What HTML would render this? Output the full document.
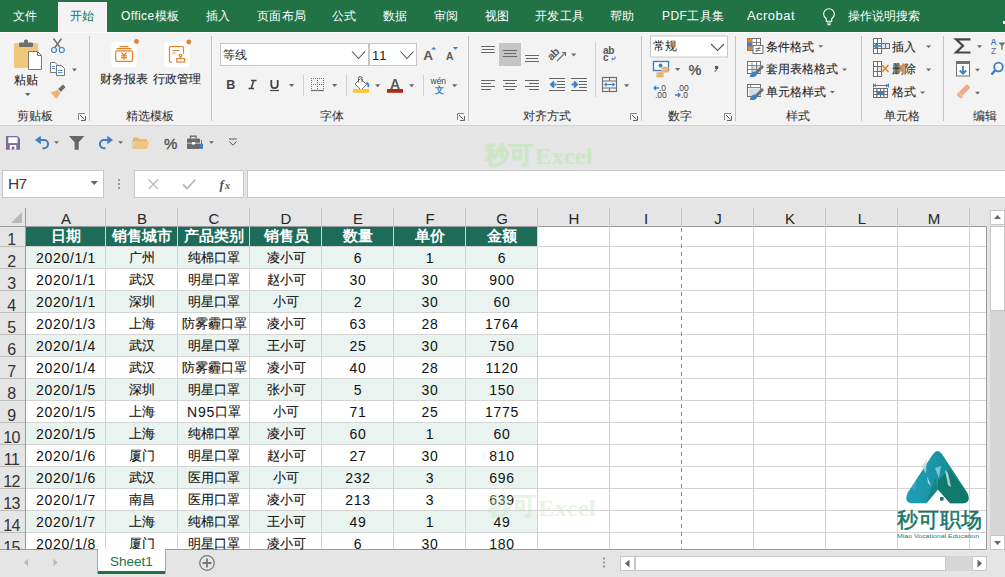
<!DOCTYPE html><html><head><meta charset="utf-8"><style>
html,body{margin:0;padding:0;width:1005px;height:577px;overflow:hidden;position:relative;font-family:"Liberation Sans",sans-serif;background:#fff}
</style></head><body>
<div style="position:absolute;left:0px;top:0px;width:1005px;height:32px;background:#217346"></div>
<div style="position:absolute;left:58px;top:2px;width:49px;height:31px;background:#f3f3f3;border:1px solid #fcfcfc;border-bottom:0;box-sizing:border-box"></div>
<div style="position:absolute;left:13px;top:7px;white-space:nowrap;color:#fff;font-size:12px;line-height:19px;letter-spacing:0.4px">文件</div>
<div style="position:absolute;left:121px;top:7px;white-space:nowrap;color:#fff;font-size:12px;line-height:19px;letter-spacing:0.4px">Office模板</div>
<div style="position:absolute;left:206px;top:7px;white-space:nowrap;color:#fff;font-size:12px;line-height:19px;letter-spacing:0.4px">插入</div>
<div style="position:absolute;left:257px;top:7px;white-space:nowrap;color:#fff;font-size:12px;line-height:19px;letter-spacing:0.4px">页面布局</div>
<div style="position:absolute;left:332px;top:7px;white-space:nowrap;color:#fff;font-size:12px;line-height:19px;letter-spacing:0.4px">公式</div>
<div style="position:absolute;left:383px;top:7px;white-space:nowrap;color:#fff;font-size:12px;line-height:19px;letter-spacing:0.4px">数据</div>
<div style="position:absolute;left:434px;top:7px;white-space:nowrap;color:#fff;font-size:12px;line-height:19px;letter-spacing:0.4px">审阅</div>
<div style="position:absolute;left:485px;top:7px;white-space:nowrap;color:#fff;font-size:12px;line-height:19px;letter-spacing:0.4px">视图</div>
<div style="position:absolute;left:535px;top:7px;white-space:nowrap;color:#fff;font-size:12px;line-height:19px;letter-spacing:0.4px">开发工具</div>
<div style="position:absolute;left:610px;top:7px;white-space:nowrap;color:#fff;font-size:12px;line-height:19px;letter-spacing:0.4px">帮助</div>
<div style="position:absolute;left:662px;top:7px;white-space:nowrap;color:#fff;font-size:12px;line-height:19px;letter-spacing:0.4px">PDF工具集</div>
<div style="position:absolute;left:747px;top:7px;white-space:nowrap;color:#fff;font-size:13px;line-height:18px;letter-spacing:0.45px">Acrobat</div>
<div style="position:absolute;left:1003px;top:21px;width:2px;height:3px;background:#fff"></div>
<div style="position:absolute;left:848px;top:7px;white-space:nowrap;color:#fff;font-size:12px;line-height:18px">操作说明搜索</div>
<svg style="position:absolute;left:820px;top:8px" width="18" height="18" viewBox="0 0 18 18"><path d="M6.3 13.3v-2.6c-1.6-1-2.7-2.7-2.7-4.6a5.4 5.4 0 0 1 10.8 0c0 1.9-1.1 3.6-2.7 4.6v2.6z" fill="none" stroke="#fff" stroke-width="1.1"/><path d="M6.8 15h4.4M7.6 16.6h2.8" stroke="#fff" stroke-width="1.1"/></svg>
<div style="position:absolute;left:70px;top:7px;white-space:nowrap;color:#217346;font-size:12px;line-height:19px;letter-spacing:0.4px">开始</div>
<div style="position:absolute;left:0px;top:32px;width:1005px;height:93px;background:#f3f3f3"></div>
<div style="position:absolute;left:0px;top:32px;width:1005px;height:1px;background:#fafafa"></div>
<div style="position:absolute;left:0px;top:125px;width:1005px;height:1px;background:#d2d2d2"></div>
<svg style="position:absolute;left:0;top:0" width="1005" height="125" viewBox="0 0 1005 125"><rect x="14" y="43" width="24" height="25" rx="1.5" fill="#efc87c"/><rect x="19" y="42.5" width="14" height="4.5" rx="1" fill="#6f6f6f"/><rect x="24" y="39.5" width="4" height="4" rx="1.5" fill="#6f6f6f"/><path d="M28.5 51.5h9l4 4v14h-13z" fill="#fff" stroke="#777" stroke-width="1"/><path d="M37.5 51.5v4h4" fill="none" stroke="#777" stroke-width="1"/><path d="M25 93h5.5l-2.75 3z" fill="#666"/><path d="M53.5 38.5l6.5 9M61.5 38.5l-6.5 9" stroke="#6f6f6f" stroke-width="1.5" fill="none"/><circle cx="54" cy="50" r="2.5" fill="none" stroke="#3c7fc4" stroke-width="1.1"/><circle cx="61.8" cy="50" r="2.5" fill="none" stroke="#3c7fc4" stroke-width="1.1"/><path d="M50.5 62.5h4.5l2 2v8h-6.5z" fill="#fff" stroke="#777" stroke-width="1"/><path d="M56.5 65.5h5l3 3v7h-8z" fill="#fff" stroke="#777" stroke-width="1"/><path d="M52 66.5h3M52 68.5h3M58 70.5h4.5M58 72.5h4.5" stroke="#3c7fc4" stroke-width="0.9"/><path d="M72 68.5h5l-2.5 3z" fill="#6a6a6a"/><path d="M58 89l5-4.5 2.5 2.5-4.5 5z" fill="#6f6f6f"/><path d="M50.5 92.5l7-2.5 3 3-4 6z" fill="#e8b472"/><rect x="111" y="41.5" width="26" height="26" rx="2.5" fill="#fff" stroke="#fdf3e3" stroke-width="0.8"/><rect x="164" y="41.5" width="26" height="26" rx="2.5" fill="#fff" stroke="#fdf3e3" stroke-width="0.8"/><circle cx="136.5" cy="41.5" r="2.4" fill="#e3812f"/><circle cx="188.8" cy="42" r="2.4" fill="#e3812f"/><g stroke="#e3812f" fill="none" stroke-width="1.2"><path d="M119.5 46.6h9M116.5 48.6h15"/><rect x="115.8" y="50.8" width="16.6" height="10.6" rx="1"/><path d="M121.5 52.5l2.5 2.8 2.5-2.8M124 55.3v4.5M121 55.8h6M121 57.8h6"/></g><g stroke="#e3812f" fill="none" stroke-width="1.2"><path d="M172 62.2h-1.5a1 1 0 0 1-1-1v-13.7a1 1 0 0 1 1-1h12a1 1 0 0 1 1 1v6"/><path d="M172.5 50.5h7M172.5 53h3"/><circle cx="180.5" cy="55.6" r="1.3"/><path d="M180.5 57v1.5"/><rect x="176.8" y="58.6" width="7.8" height="3.4"/></g><rect x="220.5" y="43.5" width="148" height="22" fill="#fff" stroke="#c6c6c6"/><rect x="369.5" y="43.5" width="47" height="22" fill="#fff" stroke="#c6c6c6"/><path d="M352 51.5l6.5 7 6.5-7M400.5 51.5l6.5 7 6.5-7" fill="none" stroke="#555" stroke-width="1.1"/><text x="423.3" y="59.8" font-family="Liberation Sans" font-weight="bold" font-size="13.5" fill="#5a5a5a">A</text><path d="M431 49.6l2.7-2.6 2.7 2.6z" fill="#3c7fc4"/><text x="446" y="59.8" font-family="Liberation Sans" font-weight="bold" font-size="10.3" fill="#5a5a5a">A</text><path d="M452.8 47h5.2l-2.6 2.8z" fill="#3c7fc4"/><text x="226.3" y="89" font-family="Liberation Sans" font-weight="bold" font-size="12.5" fill="#444">B</text><path d="M251 80.5h5.5M248.5 88.5h5.5M253.8 80.5l-2.6 8" stroke="#444" stroke-width="1.6" fill="none"/><path d="M271.3 80v5a3.2 3.2 0 0 0 6.4 0v-5" stroke="#444" stroke-width="1.8" fill="none"/><path d="M270 90.5h9" stroke="#444" stroke-width="1.2"/><path d="M289 84h5.3l-2.65 3z" fill="#6a6a6a"/><g fill="#6f6f6f"><rect x="311" y="78" width="1" height="1"/><rect x="311" y="84" width="1" height="1"/><rect x="313" y="78" width="1" height="1"/><rect x="313" y="84" width="1" height="1"/><rect x="315" y="78" width="1" height="1"/><rect x="315" y="84" width="1" height="1"/><rect x="317" y="78" width="1" height="1"/><rect x="317" y="84" width="1" height="1"/><rect x="319" y="78" width="1" height="1"/><rect x="319" y="84" width="1" height="1"/><rect x="321" y="78" width="1" height="1"/><rect x="321" y="84" width="1" height="1"/><rect x="323" y="78" width="1" height="1"/><rect x="323" y="84" width="1" height="1"/><rect x="311" y="78" width="1" height="1"/><rect x="317" y="78" width="1" height="1"/><rect x="323" y="78" width="1" height="1"/><rect x="311" y="80" width="1" height="1"/><rect x="317" y="80" width="1" height="1"/><rect x="323" y="80" width="1" height="1"/><rect x="311" y="82" width="1" height="1"/><rect x="317" y="82" width="1" height="1"/><rect x="323" y="82" width="1" height="1"/><rect x="311" y="84" width="1" height="1"/><rect x="317" y="84" width="1" height="1"/><rect x="323" y="84" width="1" height="1"/><rect x="311" y="86" width="1" height="1"/><rect x="317" y="86" width="1" height="1"/><rect x="323" y="86" width="1" height="1"/><rect x="311" y="88" width="1" height="1"/><rect x="317" y="88" width="1" height="1"/><rect x="323" y="88" width="1" height="1"/></g><path d="M311 90.5h13" stroke="#6f6f6f" stroke-width="1.2"/><path d="M332 84h5.3l-2.65 3z" fill="#6a6a6a"/><path d="M355 84l5.5-5.5 6 6-5.5 5.5z" fill="#fff" stroke="#6f6f6f" stroke-width="1"/><path d="M358.5 82.5v-4.2a1.8 1.8 0 0 1 3.6 0v3.8" fill="none" stroke="#555" stroke-width="1"/><path d="M366.5 82.5c1.5 1 2.5 2.5 1.6 4.5" stroke="#3c7fc4" stroke-width="1.8" fill="none"/><rect x="353" y="89" width="16" height="3.8" fill="#fcc630"/><path d="M375 84.2h5.3l-2.65 3z" fill="#6a6a6a"/><text x="390" y="89.3" font-family="Liberation Sans" font-weight="bold" font-size="14" fill="#5a5a5a">A</text><rect x="387" y="89" width="16" height="3.8" fill="#b2290c"/><path d="M409 84.2h5.3l-2.65 3z" fill="#6a6a6a"/><text x="430.5" y="83.7" font-family="Liberation Sans" font-size="8.5" fill="#444">wén</text><text x="434.5" y="92.8" font-family="Liberation Sans" font-size="9" font-weight="bold" fill="#3c7fc4">文</text><path d="M452 84.2h5.3l-2.65 3z" fill="#6a6a6a"/><path d="M78.5 120v-6.5h6.5" fill="none" stroke="#888" stroke-width="1"/><path d="M80 115l4.5 4.5M85.5 116v4.5h-4.5" fill="none" stroke="#666" stroke-width="1"/><path d="M457.5 120v-6.5h6.5" fill="none" stroke="#888" stroke-width="1"/><path d="M459 115l4.5 4.5M464.5 116v4.5h-4.5" fill="none" stroke="#666" stroke-width="1"/><path d="M630.5 120v-6.5h6.5" fill="none" stroke="#888" stroke-width="1"/><path d="M632 115l4.5 4.5M637.5 116v4.5h-4.5" fill="none" stroke="#666" stroke-width="1"/><path d="M724.5 120v-6.5h6.5" fill="none" stroke="#888" stroke-width="1"/><path d="M726 115l4.5 4.5M731.5 116v4.5h-4.5" fill="none" stroke="#666" stroke-width="1"/><rect x="499" y="43" width="22" height="23" fill="#c5c5c5"/><path d="M481 46.5h14" stroke="#666" stroke-width="1"/><path d="M482 49.5h12" stroke="#666" stroke-width="1"/><path d="M481 52.5h14" stroke="#666" stroke-width="1"/><path d="M503 50.5h14" stroke="#666" stroke-width="1"/><path d="M504 53.5h12" stroke="#666" stroke-width="1"/><path d="M503 56.5h14" stroke="#666" stroke-width="1"/><path d="M525 55.5h14" stroke="#666" stroke-width="1"/><path d="M526 58.5h12" stroke="#666" stroke-width="1"/><path d="M525 61.5h14" stroke="#666" stroke-width="1"/><text x="0" y="0" transform="translate(551.5 61) rotate(-45)" font-family="Liberation Sans" font-size="11" fill="#5a5a5a" font-weight="bold" letter-spacing="-0.5">ab</text><path d="M557 61l8-8M562 52.5h3.5v3.5" stroke="#6f6f6f" stroke-width="1.1" fill="none"/><path d="M571 53.5h5.3l-2.65 3z" fill="#6a6a6a"/><path d="M481 80.5h14" stroke="#666" stroke-width="1"/><path d="M481 83.5h10" stroke="#666" stroke-width="1"/><path d="M481 86.5h14" stroke="#666" stroke-width="1"/><path d="M481 89.5h10" stroke="#666" stroke-width="1"/><path d="M503 80.5h14" stroke="#666" stroke-width="1"/><path d="M505 83.5h10" stroke="#666" stroke-width="1"/><path d="M503 86.5h14" stroke="#666" stroke-width="1"/><path d="M505 89.5h10" stroke="#666" stroke-width="1"/><path d="M525 80.5h14" stroke="#666" stroke-width="1"/><path d="M529 83.5h10" stroke="#666" stroke-width="1"/><path d="M525 86.5h14" stroke="#666" stroke-width="1"/><path d="M529 89.5h10" stroke="#666" stroke-width="1"/><path d="M549 78.5h16" stroke="#666" stroke-width="1"/><path d="M557 81.5h8" stroke="#666" stroke-width="1"/><path d="M557 84.5h8" stroke="#666" stroke-width="1"/><path d="M557 87.5h8" stroke="#666" stroke-width="1"/><path d="M549 90.5h16" stroke="#666" stroke-width="1"/><path d="M556.5 84.5h-5.5M554 81.5l-3 3 3 3" stroke="#3c7fc4" stroke-width="2" fill="none"/><path d="M571 78.5h16" stroke="#666" stroke-width="1"/><path d="M579 81.5h8" stroke="#666" stroke-width="1"/><path d="M579 84.5h8" stroke="#666" stroke-width="1"/><path d="M579 87.5h8" stroke="#666" stroke-width="1"/><path d="M571 90.5h16" stroke="#666" stroke-width="1"/><path d="M571.5 84.5h5.5M574 81.5l3 3-3 3" stroke="#3c7fc4" stroke-width="2" fill="none"/><text x="603" y="53.8" font-family="Liberation Sans" font-size="10" fill="#555" font-weight="bold" letter-spacing="-0.3">ab</text><text x="603" y="61" font-family="Liberation Sans" font-size="10" fill="#555" font-weight="bold">c</text><path d="M615 56.5v2.5h-3M613 57.8l-1.3 1.2 1.3 1.2" stroke="#3c7fc4" stroke-width="1" fill="none"/><rect x="602.5" y="77.5" width="14" height="14" fill="none" stroke="#6f6f6f" stroke-width="1.2"/><path d="M602.5 81h14M602.5 88h14M609.5 77.5v3.5M609.5 88v3.5" stroke="#6f6f6f" stroke-width="1.1"/><path d="M604.5 84.5h10M606.5 82.8l-1.8 1.7 1.8 1.7M612.5 82.8l1.8 1.7-1.8 1.7" stroke="#3c7fc4" stroke-width="1.1" fill="none"/><path d="M624 84.3h5.3l-2.65 3z" fill="#6a6a6a"/><rect x="650.5" y="36" width="77" height="21" fill="#fff" stroke="#c6c6c6"/><path d="M711 44l6.5 6.5 6.5-6.5" fill="none" stroke="#555" stroke-width="1.1"/><rect x="653.5" y="61.5" width="15" height="9" fill="#fff" stroke="#3c7fc4" stroke-width="1.4"/><circle cx="660.5" cy="65.5" r="2" fill="#3c7fc4"/><g fill="#e8b472"><ellipse cx="665" cy="68" rx="4" ry="1.5"/><ellipse cx="665" cy="71" rx="4" ry="1.5"/><ellipse cx="660" cy="73.5" rx="4" ry="1.5"/><ellipse cx="660" cy="76" rx="4" ry="1.5"/></g><path d="M675 68h5.3l-2.65 3z" fill="#6a6a6a"/><text x="688.5" y="74.6" font-family="Liberation Sans" font-size="14.5" font-weight="bold" fill="#5a5a5a">%</text><path d="M716.8 65.8a1.7 1.7 0 1 1 0 3.4c0 0 .8 1.5-2.2 2.6l-.3-.7c1.6-.7 1.8-1.5 1.8-1.9a1.7 1.7 0 0 1 .7-3.4z" fill="#555"/><text x="659" y="90.8" font-family="Liberation Sans" font-size="8.5" fill="#444">.0</text><text x="655" y="97.8" font-family="Liberation Sans" font-size="8.5" fill="#444">.00</text><path d="M659 88h-5M656 86l-2 2 2 2" stroke="#3c7fc4" stroke-width="1.3" fill="none"/><text x="677" y="90.8" font-family="Liberation Sans" font-size="8.5" fill="#444">.00</text><text x="681" y="97.8" font-family="Liberation Sans" font-size="8.5" fill="#444">.0</text><path d="M675 95h5M678 93l2 2-2 2" stroke="#3c7fc4" stroke-width="1.3" fill="none"/><rect x="747.5" y="38.5" width="13" height="12" fill="#fff" stroke="#6f6f6f"/><path d="M747.5 42.5h13M747.5 46.5h13M752 38.5v12M756.5 38.5v12" stroke="#6f6f6f" stroke-width="0.8"/><rect x="747.5" y="38.5" width="4.5" height="4" fill="#e3812f"/><rect x="747.5" y="42.5" width="4.5" height="4" fill="#3c7fc4"/><rect x="747.5" y="46.5" width="4.5" height="4" fill="#e3812f"/><rect x="753" y="45.5" width="10" height="8" fill="#fff" stroke="#6f6f6f"/><path d="M755.5 48.5h5M755.5 50.5h5M759.5 47l-3 5" stroke="#555" stroke-width="0.8"/><rect x="747.5" y="61.5" width="13" height="12" fill="#fff" stroke="#6f6f6f"/><rect x="752" y="65.5" width="8.5" height="7.5" fill="#cfe0ea"/><path d="M747.5 65.5h13M747.5 69.5h13M752 61.5v12M756.5 61.5v12" stroke="#6f6f6f" stroke-width="0.8"/><path d="M755 72l7-7 2 2-7 7z" fill="#6f6f6f"/><path d="M750 77c0-3 2-5.5 5-5.5l2 2c0 3-3 4-7 3.5z" fill="#3c7fc4"/><rect x="747.5" y="84.5" width="13" height="12" fill="#fff" stroke="#6f6f6f"/><rect x="749" y="88.5" width="11.5" height="7.5" fill="#cfe0ea"/><path d="M747.5 87.5h13M750.5 84.5v3" stroke="#6f6f6f" stroke-width="0.8"/><path d="M755 95l7-7 2 2-7 7z" fill="#6f6f6f"/><path d="M750 100c0-3 2-5.5 5-5.5l2 2c0 3-3 4-7 3.5z" fill="#3c7fc4"/><path d="M818.3 45.2h4.8l-2.4 2.5z" fill="#6a6a6a"/><path d="M842.2 68.5h4.8l-2.4 2.5z" fill="#6a6a6a"/><path d="M830 91h4.8l-2.4 2.5z" fill="#6a6a6a"/><g stroke="#6f6f6f" stroke-width="1" fill="#fff"><rect x="873.5" y="38.5" width="4" height="5"/><rect x="877.5" y="38.5" width="4" height="5"/><rect x="873.5" y="43.5" width="4" height="5"/><rect x="877.5" y="43.5" width="4" height="5"/><rect x="873.5" y="48.5" width="4" height="5"/><rect x="877.5" y="48.5" width="4" height="5"/></g><g stroke="#6f6f6f" stroke-width="1" fill="#dbe8f0"><rect x="881.5" y="43.5" width="4" height="5"/><rect x="885.5" y="43.5" width="4" height="5"/></g><path d="M882 46h-7M877.5 43.2l-2.8 2.8 2.8 2.8" stroke="#3c7fc4" stroke-width="1.7" fill="none"/><g stroke="#6f6f6f" stroke-width="1" fill="#fff"><rect x="873.5" y="61.5" width="4" height="5"/><rect x="877.5" y="61.5" width="4" height="5"/><rect x="873.5" y="66.5" width="4" height="5"/><rect x="877.5" y="66.5" width="4" height="5"/><rect x="873.5" y="71.5" width="4" height="5"/><rect x="877.5" y="71.5" width="4" height="5"/></g><rect x="878" y="67" width="3" height="4" fill="#dbe8f0"/><path d="M882 65l6.5 7M888.5 65l-6.5 7" stroke="#e3812f" stroke-width="1.6"/><g stroke="#6f6f6f" stroke-width="1" fill="#fff"><rect x="873.5" y="88.5" width="3.5" height="3"/><rect x="873.5" y="91.5" width="3.5" height="3"/><rect x="873.5" y="94.5" width="3.5" height="3"/><rect x="877.0" y="88.5" width="3.5" height="3"/><rect x="877.0" y="91.5" width="3.5" height="3"/><rect x="877.0" y="94.5" width="3.5" height="3"/><rect x="880.5" y="88.5" width="3.5" height="3"/><rect x="880.5" y="91.5" width="3.5" height="3"/><rect x="880.5" y="94.5" width="3.5" height="3"/><rect x="884.0" y="88.5" width="3.5" height="3"/><rect x="884.0" y="91.5" width="3.5" height="3"/><rect x="884.0" y="94.5" width="3.5" height="3"/></g><rect x="877" y="91.5" width="7" height="3" fill="#3c7fc4"/><path d="M874 85.5h14M876 84l-2 1.5 2 1.5M886 84l2 1.5-2 1.5M873.5 83.5v4M888.5 83.5v4" stroke="#3c7fc4" stroke-width="1" fill="none"/><path d="M926 45.4h5.2l-2.6 2.6z" fill="#6a6a6a"/><path d="M926 68.6h5.2l-2.6 2.6z" fill="#6a6a6a"/><path d="M920 91.5h5.2l-2.6 2.6z" fill="#6a6a6a"/><path d="M970.5 39.3h-14.5l7 6.5-7 6.7h14.5" stroke="#454545" stroke-width="2.2" fill="none" stroke-linejoin="miter"/><path d="M977 45.2h5l-2.5 2.8z" fill="#6a6a6a"/><text x="990.5" y="44.6" font-family="Liberation Sans" font-size="8.5" font-weight="bold" fill="#3c7fc4">A</text><text x="991" y="53.7" font-family="Liberation Sans" font-size="8.5" fill="#7a5f96">Z</text><path d="M998.5 42.5h7l-2.8 3.3v4h-1.4v-4z" fill="#6f6f6f"/><rect x="956.5" y="61.5" width="13" height="14.5" fill="#fff" stroke="#6f6f6f"/><rect x="956" y="61" width="14" height="3" fill="#6f6f6f"/><path d="M963 66v7.5M959.8 70.5l3.2 3.2 3.2-3.2" stroke="#3c7fc4" stroke-width="1.8" fill="none"/><path d="M975 68.8h5l-2.5 2.8z" fill="#6a6a6a"/><circle cx="998.5" cy="67" r="4.3" fill="none" stroke="#3c7fc4" stroke-width="1.8"/><path d="M995.3 70.3l-3.8 4.2" stroke="#3c7fc4" stroke-width="2.4"/><path d="M957.5 93.5l8.5-8.5a1.5 1.5 0 0 1 2 0l1.5 1.5a1.5 1.5 0 0 1 0 2l-8.5 8.5z" fill="#eea88c"/><path d="M957.5 93.5l1.2-1.2 4.5 4.5-1.2 1.2a1.5 1.5 0 0 1-2 0l-2.5-2.5a1.5 1.5 0 0 1 0-2z" fill="#eea88c"/><path d="M958.7 92.3l4.5 4.5" stroke="#fbe3d8" stroke-width="1"/><path d="M975 91.8h5l-2.5 2.8z" fill="#6a6a6a"/></svg>
<div style="position:absolute;left:89px;top:36px;width:1px;height:85px;background:#c2c2c2"></div>
<div style="position:absolute;left:211px;top:36px;width:1px;height:85px;background:#c2c2c2"></div>
<div style="position:absolute;left:468px;top:36px;width:1px;height:85px;background:#c2c2c2"></div>
<div style="position:absolute;left:641px;top:36px;width:1px;height:85px;background:#c2c2c2"></div>
<div style="position:absolute;left:735px;top:36px;width:1px;height:85px;background:#c2c2c2"></div>
<div style="position:absolute;left:861px;top:36px;width:1px;height:85px;background:#c2c2c2"></div>
<div style="position:absolute;left:943px;top:36px;width:1px;height:85px;background:#c2c2c2"></div>
<div style="position:absolute;left:303px;top:75px;width:1px;height:21px;background:#d0d0d0"></div>
<div style="position:absolute;left:346px;top:75px;width:1px;height:21px;background:#d0d0d0"></div>
<div style="position:absolute;left:423px;top:75px;width:1px;height:21px;background:#d0d0d0"></div>
<div style="position:absolute;left:595px;top:75px;width:1px;height:21px;background:#d0d0d0"></div>
<div style="position:absolute;left:595px;top:42px;width:1px;height:55px;background:#d0d0d0"></div>
<div style="position:absolute;left:17px;top:107px;white-space:nowrap;color:#333;font-size:12px;line-height:18px;-webkit-text-stroke:0.05px #333">剪贴板</div>
<div style="position:absolute;left:126px;top:107px;white-space:nowrap;color:#333;font-size:12px;line-height:18px;-webkit-text-stroke:0.05px #333">精选模板</div>
<div style="position:absolute;left:320px;top:107px;white-space:nowrap;color:#333;font-size:12px;line-height:18px;-webkit-text-stroke:0.05px #333">字体</div>
<div style="position:absolute;left:523px;top:107px;white-space:nowrap;color:#333;font-size:12px;line-height:18px;-webkit-text-stroke:0.05px #333">对齐方式</div>
<div style="position:absolute;left:668px;top:107px;white-space:nowrap;color:#333;font-size:12px;line-height:18px;-webkit-text-stroke:0.05px #333">数字</div>
<div style="position:absolute;left:786px;top:107px;white-space:nowrap;color:#333;font-size:12px;line-height:18px;-webkit-text-stroke:0.05px #333">样式</div>
<div style="position:absolute;left:884px;top:107px;white-space:nowrap;color:#333;font-size:12px;line-height:18px;-webkit-text-stroke:0.05px #333">单元格</div>
<div style="position:absolute;left:973px;top:107px;white-space:nowrap;color:#333;font-size:12px;line-height:18px;-webkit-text-stroke:0.05px #333">编辑</div>
<div style="position:absolute;left:14px;top:72px;white-space:nowrap;color:#262626;font-size:12px;line-height:16px;-webkit-text-stroke:0.1px #262626">粘贴</div>
<div style="position:absolute;left:100px;top:71px;white-space:nowrap;color:#262626;font-size:12px;line-height:16px;-webkit-text-stroke:0.1px #262626">财务报表</div>
<div style="position:absolute;left:153px;top:71px;white-space:nowrap;color:#262626;font-size:12px;line-height:16px;-webkit-text-stroke:0.1px #262626">行政管理</div>
<div style="position:absolute;left:223px;top:47px;white-space:nowrap;color:#222;font-size:12px;line-height:16px">等线</div>
<div style="position:absolute;left:372px;top:48px;white-space:nowrap;color:#222;font-size:13px;line-height:16px;letter-spacing:1px">11</div>
<div style="position:absolute;left:653px;top:38px;white-space:nowrap;color:#222;font-size:12px;line-height:16px">常规</div>
<div style="position:absolute;left:766px;top:39px;white-space:nowrap;color:#262626;font-size:12px;line-height:16px;-webkit-text-stroke:0.1px #262626">条件格式</div>
<div style="position:absolute;left:766px;top:61px;white-space:nowrap;color:#262626;font-size:12px;line-height:16px;-webkit-text-stroke:0.1px #262626">套用表格格式</div>
<div style="position:absolute;left:766px;top:84px;white-space:nowrap;color:#262626;font-size:12px;line-height:16px;-webkit-text-stroke:0.1px #262626">单元格样式</div>
<div style="position:absolute;left:892px;top:39px;white-space:nowrap;color:#262626;font-size:12px;line-height:16px;-webkit-text-stroke:0.1px #262626">插入</div>
<div style="position:absolute;left:892px;top:61px;white-space:nowrap;color:#262626;font-size:12px;line-height:16px;-webkit-text-stroke:0.1px #262626">删除</div>
<div style="position:absolute;left:892px;top:84px;white-space:nowrap;color:#262626;font-size:12px;line-height:16px;-webkit-text-stroke:0.1px #262626">格式</div>
<div style="position:absolute;left:0px;top:126px;width:1005px;height:83px;background:#e4e5e4"></div>
<div style="position:absolute;left:2px;top:170px;width:102px;height:28px;background:#fff;border:1px solid #c6c6c6;box-sizing:border-box"></div>
<div style="position:absolute;left:8px;top:175px;white-space:nowrap;color:#3a3a3a;font-size:15.5px;line-height:18px;letter-spacing:-0.8px">H7</div>
<div style="position:absolute;left:134px;top:170px;width:110px;height:28px;background:#fff;border:1px solid #c6c6c6;box-sizing:border-box"></div>
<div style="position:absolute;left:247px;top:170px;width:760px;height:28px;background:#fff;border:1px solid #c6c6c6;box-sizing:border-box"></div>
<div style="position:absolute;left:0px;top:208px;width:987px;height:19px;background:#e4e5e4"></div>
<div style="position:absolute;left:0px;top:226px;width:987px;height:1px;background:#9b9b9b"></div>
<div style="position:absolute;left:26px;top:210px;width:80px;white-space:nowrap;color:#262626;font-size:15px;line-height:17px;text-align:center">A</div>
<div style="position:absolute;left:106px;top:210px;width:72px;white-space:nowrap;color:#262626;font-size:15px;line-height:17px;text-align:center">B</div>
<div style="position:absolute;left:178px;top:210px;width:72px;white-space:nowrap;color:#262626;font-size:15px;line-height:17px;text-align:center">C</div>
<div style="position:absolute;left:250px;top:210px;width:72px;white-space:nowrap;color:#262626;font-size:15px;line-height:17px;text-align:center">D</div>
<div style="position:absolute;left:322px;top:210px;width:72px;white-space:nowrap;color:#262626;font-size:15px;line-height:17px;text-align:center">E</div>
<div style="position:absolute;left:394px;top:210px;width:72px;white-space:nowrap;color:#262626;font-size:15px;line-height:17px;text-align:center">F</div>
<div style="position:absolute;left:466px;top:210px;width:72px;white-space:nowrap;color:#262626;font-size:15px;line-height:17px;text-align:center">G</div>
<div style="position:absolute;left:538px;top:210px;width:72px;white-space:nowrap;color:#262626;font-size:15px;line-height:17px;text-align:center">H</div>
<div style="position:absolute;left:610px;top:210px;width:72px;white-space:nowrap;color:#262626;font-size:15px;line-height:17px;text-align:center">I</div>
<div style="position:absolute;left:682px;top:210px;width:72px;white-space:nowrap;color:#262626;font-size:15px;line-height:17px;text-align:center">J</div>
<div style="position:absolute;left:754px;top:210px;width:72px;white-space:nowrap;color:#262626;font-size:15px;line-height:17px;text-align:center">K</div>
<div style="position:absolute;left:826px;top:210px;width:72px;white-space:nowrap;color:#262626;font-size:15px;line-height:17px;text-align:center">L</div>
<div style="position:absolute;left:898px;top:210px;width:72px;white-space:nowrap;color:#262626;font-size:15px;line-height:17px;text-align:center">M</div>
<div style="position:absolute;left:25px;top:208px;width:1px;height:19px;background:#c4c4c4"></div>
<div style="position:absolute;left:105px;top:208px;width:1px;height:19px;background:#c4c4c4"></div>
<div style="position:absolute;left:177px;top:208px;width:1px;height:19px;background:#c4c4c4"></div>
<div style="position:absolute;left:249px;top:208px;width:1px;height:19px;background:#c4c4c4"></div>
<div style="position:absolute;left:321px;top:208px;width:1px;height:19px;background:#c4c4c4"></div>
<div style="position:absolute;left:393px;top:208px;width:1px;height:19px;background:#c4c4c4"></div>
<div style="position:absolute;left:465px;top:208px;width:1px;height:19px;background:#c4c4c4"></div>
<div style="position:absolute;left:537px;top:208px;width:1px;height:19px;background:#c4c4c4"></div>
<div style="position:absolute;left:609px;top:208px;width:1px;height:19px;background:#c4c4c4"></div>
<div style="position:absolute;left:681px;top:208px;width:1px;height:19px;background:#c4c4c4"></div>
<div style="position:absolute;left:753px;top:208px;width:1px;height:19px;background:#c4c4c4"></div>
<div style="position:absolute;left:825px;top:208px;width:1px;height:19px;background:#c4c4c4"></div>
<div style="position:absolute;left:897px;top:208px;width:1px;height:19px;background:#c4c4c4"></div>
<div style="position:absolute;left:969px;top:208px;width:1px;height:19px;background:#c4c4c4"></div>
<div style="position:absolute;left:0px;top:227px;width:987px;height:322px;background:#fff"></div>
<div style="position:absolute;left:0px;top:227px;width:25px;height:322px;background:#e4e5e4"></div>
<div style="position:absolute;left:26px;top:227px;width:511px;height:19px;background:#1d6b59"></div>
<div style="position:absolute;left:26px;top:247px;width:511px;height:21px;background:#e9f3f0"></div>
<div style="position:absolute;left:26px;top:291px;width:511px;height:21px;background:#e9f3f0"></div>
<div style="position:absolute;left:26px;top:335px;width:511px;height:21px;background:#e9f3f0"></div>
<div style="position:absolute;left:26px;top:379px;width:511px;height:21px;background:#e9f3f0"></div>
<div style="position:absolute;left:26px;top:423px;width:511px;height:21px;background:#e9f3f0"></div>
<div style="position:absolute;left:26px;top:467px;width:511px;height:21px;background:#e9f3f0"></div>
<div style="position:absolute;left:26px;top:511px;width:511px;height:21px;background:#e9f3f0"></div>
<div style="position:absolute;left:0px;top:246px;width:987px;height:1px;background:#d4d4d4"></div>
<div style="position:absolute;left:0px;top:246px;width:25px;height:1px;background:#bdbdbd"></div>
<div style="position:absolute;left:0px;top:268px;width:987px;height:1px;background:#d4d4d4"></div>
<div style="position:absolute;left:0px;top:268px;width:25px;height:1px;background:#bdbdbd"></div>
<div style="position:absolute;left:0px;top:290px;width:987px;height:1px;background:#d4d4d4"></div>
<div style="position:absolute;left:0px;top:290px;width:25px;height:1px;background:#bdbdbd"></div>
<div style="position:absolute;left:0px;top:312px;width:987px;height:1px;background:#d4d4d4"></div>
<div style="position:absolute;left:0px;top:312px;width:25px;height:1px;background:#bdbdbd"></div>
<div style="position:absolute;left:0px;top:334px;width:987px;height:1px;background:#d4d4d4"></div>
<div style="position:absolute;left:0px;top:334px;width:25px;height:1px;background:#bdbdbd"></div>
<div style="position:absolute;left:0px;top:356px;width:987px;height:1px;background:#d4d4d4"></div>
<div style="position:absolute;left:0px;top:356px;width:25px;height:1px;background:#bdbdbd"></div>
<div style="position:absolute;left:0px;top:378px;width:987px;height:1px;background:#d4d4d4"></div>
<div style="position:absolute;left:0px;top:378px;width:25px;height:1px;background:#bdbdbd"></div>
<div style="position:absolute;left:0px;top:400px;width:987px;height:1px;background:#d4d4d4"></div>
<div style="position:absolute;left:0px;top:400px;width:25px;height:1px;background:#bdbdbd"></div>
<div style="position:absolute;left:0px;top:422px;width:987px;height:1px;background:#d4d4d4"></div>
<div style="position:absolute;left:0px;top:422px;width:25px;height:1px;background:#bdbdbd"></div>
<div style="position:absolute;left:0px;top:444px;width:987px;height:1px;background:#d4d4d4"></div>
<div style="position:absolute;left:0px;top:444px;width:25px;height:1px;background:#bdbdbd"></div>
<div style="position:absolute;left:0px;top:466px;width:987px;height:1px;background:#d4d4d4"></div>
<div style="position:absolute;left:0px;top:466px;width:25px;height:1px;background:#bdbdbd"></div>
<div style="position:absolute;left:0px;top:488px;width:987px;height:1px;background:#d4d4d4"></div>
<div style="position:absolute;left:0px;top:488px;width:25px;height:1px;background:#bdbdbd"></div>
<div style="position:absolute;left:0px;top:510px;width:987px;height:1px;background:#d4d4d4"></div>
<div style="position:absolute;left:0px;top:510px;width:25px;height:1px;background:#bdbdbd"></div>
<div style="position:absolute;left:0px;top:532px;width:987px;height:1px;background:#d4d4d4"></div>
<div style="position:absolute;left:0px;top:532px;width:25px;height:1px;background:#bdbdbd"></div>
<div style="position:absolute;left:105px;top:227px;width:1px;height:322px;background:#d4d4d4"></div>
<div style="position:absolute;left:177px;top:227px;width:1px;height:322px;background:#d4d4d4"></div>
<div style="position:absolute;left:249px;top:227px;width:1px;height:322px;background:#d4d4d4"></div>
<div style="position:absolute;left:321px;top:227px;width:1px;height:322px;background:#d4d4d4"></div>
<div style="position:absolute;left:393px;top:227px;width:1px;height:322px;background:#d4d4d4"></div>
<div style="position:absolute;left:465px;top:227px;width:1px;height:322px;background:#d4d4d4"></div>
<div style="position:absolute;left:537px;top:227px;width:1px;height:322px;background:#d4d4d4"></div>
<div style="position:absolute;left:609px;top:227px;width:1px;height:322px;background:#d4d4d4"></div>
<div style="position:absolute;left:753px;top:227px;width:1px;height:322px;background:#d4d4d4"></div>
<div style="position:absolute;left:825px;top:227px;width:1px;height:322px;background:#d4d4d4"></div>
<div style="position:absolute;left:897px;top:227px;width:1px;height:322px;background:#d4d4d4"></div>
<div style="position:absolute;left:969px;top:227px;width:1px;height:322px;background:#d4d4d4"></div>
<div style="position:absolute;left:25px;top:208px;width:1px;height:341px;background:#9b9b9b"></div>
<div style="position:absolute;left:986px;top:226px;width:1px;height:324px;background:#9b9b9b"></div>
<div style="position:absolute;left:0px;top:549px;width:987px;height:1px;background:#9b9b9b"></div>
<div style="position:absolute;left:26px;top:227px;width:80px;white-space:nowrap;color:#fff;font-weight:bold;line-height:19px;text-align:center"><span style="font-size:14.5px;vertical-align:1px;">日期</span></div>
<div style="position:absolute;left:106px;top:227px;width:72px;white-space:nowrap;color:#fff;font-weight:bold;line-height:19px;text-align:center"><span style="font-size:14.5px;vertical-align:1px;">销售城市</span></div>
<div style="position:absolute;left:178px;top:227px;width:72px;white-space:nowrap;color:#fff;font-weight:bold;line-height:19px;text-align:center"><span style="font-size:14.5px;vertical-align:1px;">产品类别</span></div>
<div style="position:absolute;left:250px;top:227px;width:72px;white-space:nowrap;color:#fff;font-weight:bold;line-height:19px;text-align:center"><span style="font-size:14.5px;vertical-align:1px;">销售员</span></div>
<div style="position:absolute;left:322px;top:227px;width:72px;white-space:nowrap;color:#fff;font-weight:bold;line-height:19px;text-align:center"><span style="font-size:14.5px;vertical-align:1px;">数量</span></div>
<div style="position:absolute;left:394px;top:227px;width:72px;white-space:nowrap;color:#fff;font-weight:bold;line-height:19px;text-align:center"><span style="font-size:14.5px;vertical-align:1px;">单价</span></div>
<div style="position:absolute;left:466px;top:227px;width:72px;white-space:nowrap;color:#fff;font-weight:bold;line-height:19px;text-align:center"><span style="font-size:14.5px;vertical-align:1px;">金额</span></div>
<div style="position:absolute;left:26px;top:247px;width:80px;white-space:nowrap;color:#111;line-height:21px;text-align:center"><span style="font-size:14px;letter-spacing:0.7px">2020/1/1</span></div>
<div style="position:absolute;left:106px;top:247px;width:72px;white-space:nowrap;color:#111;line-height:21px;text-align:center"><span style="font-size:13px;vertical-align:1px;-webkit-text-stroke:0.12px currentColor">广州</span></div>
<div style="position:absolute;left:178px;top:247px;width:72px;white-space:nowrap;color:#111;line-height:21px;text-align:center"><span style="font-size:13px;vertical-align:1px;-webkit-text-stroke:0.12px currentColor">纯棉口罩</span></div>
<div style="position:absolute;left:250px;top:247px;width:72px;white-space:nowrap;color:#111;line-height:21px;text-align:center"><span style="font-size:13px;vertical-align:1px;-webkit-text-stroke:0.12px currentColor">凌小可</span></div>
<div style="position:absolute;left:322px;top:247px;width:72px;white-space:nowrap;color:#111;line-height:21px;text-align:center"><span style="font-size:14px;letter-spacing:0.7px">6</span></div>
<div style="position:absolute;left:394px;top:247px;width:72px;white-space:nowrap;color:#111;line-height:21px;text-align:center"><span style="font-size:14px;letter-spacing:0.7px">1</span></div>
<div style="position:absolute;left:466px;top:247px;width:72px;white-space:nowrap;color:#111;line-height:21px;text-align:center"><span style="font-size:14px;letter-spacing:0.7px">6</span></div>
<div style="position:absolute;left:26px;top:269px;width:80px;white-space:nowrap;color:#111;line-height:21px;text-align:center"><span style="font-size:14px;letter-spacing:0.7px">2020/1/1</span></div>
<div style="position:absolute;left:106px;top:269px;width:72px;white-space:nowrap;color:#111;line-height:21px;text-align:center"><span style="font-size:13px;vertical-align:1px;-webkit-text-stroke:0.12px currentColor">武汉</span></div>
<div style="position:absolute;left:178px;top:269px;width:72px;white-space:nowrap;color:#111;line-height:21px;text-align:center"><span style="font-size:13px;vertical-align:1px;-webkit-text-stroke:0.12px currentColor">明星口罩</span></div>
<div style="position:absolute;left:250px;top:269px;width:72px;white-space:nowrap;color:#111;line-height:21px;text-align:center"><span style="font-size:13px;vertical-align:1px;-webkit-text-stroke:0.12px currentColor">赵小可</span></div>
<div style="position:absolute;left:322px;top:269px;width:72px;white-space:nowrap;color:#111;line-height:21px;text-align:center"><span style="font-size:14px;letter-spacing:0.7px">30</span></div>
<div style="position:absolute;left:394px;top:269px;width:72px;white-space:nowrap;color:#111;line-height:21px;text-align:center"><span style="font-size:14px;letter-spacing:0.7px">30</span></div>
<div style="position:absolute;left:466px;top:269px;width:72px;white-space:nowrap;color:#111;line-height:21px;text-align:center"><span style="font-size:14px;letter-spacing:0.7px">900</span></div>
<div style="position:absolute;left:26px;top:291px;width:80px;white-space:nowrap;color:#111;line-height:21px;text-align:center"><span style="font-size:14px;letter-spacing:0.7px">2020/1/1</span></div>
<div style="position:absolute;left:106px;top:291px;width:72px;white-space:nowrap;color:#111;line-height:21px;text-align:center"><span style="font-size:13px;vertical-align:1px;-webkit-text-stroke:0.12px currentColor">深圳</span></div>
<div style="position:absolute;left:178px;top:291px;width:72px;white-space:nowrap;color:#111;line-height:21px;text-align:center"><span style="font-size:13px;vertical-align:1px;-webkit-text-stroke:0.12px currentColor">明星口罩</span></div>
<div style="position:absolute;left:250px;top:291px;width:72px;white-space:nowrap;color:#111;line-height:21px;text-align:center"><span style="font-size:13px;vertical-align:1px;-webkit-text-stroke:0.12px currentColor">小可</span></div>
<div style="position:absolute;left:322px;top:291px;width:72px;white-space:nowrap;color:#111;line-height:21px;text-align:center"><span style="font-size:14px;letter-spacing:0.7px">2</span></div>
<div style="position:absolute;left:394px;top:291px;width:72px;white-space:nowrap;color:#111;line-height:21px;text-align:center"><span style="font-size:14px;letter-spacing:0.7px">30</span></div>
<div style="position:absolute;left:466px;top:291px;width:72px;white-space:nowrap;color:#111;line-height:21px;text-align:center"><span style="font-size:14px;letter-spacing:0.7px">60</span></div>
<div style="position:absolute;left:26px;top:313px;width:80px;white-space:nowrap;color:#111;line-height:21px;text-align:center"><span style="font-size:14px;letter-spacing:0.7px">2020/1/3</span></div>
<div style="position:absolute;left:106px;top:313px;width:72px;white-space:nowrap;color:#111;line-height:21px;text-align:center"><span style="font-size:13px;vertical-align:1px;-webkit-text-stroke:0.12px currentColor">上海</span></div>
<div style="position:absolute;left:178px;top:313px;width:72px;white-space:nowrap;color:#111;line-height:21px;text-align:center"><span style="font-size:13px;vertical-align:1px;-webkit-text-stroke:0.12px currentColor">防雾霾口罩</span></div>
<div style="position:absolute;left:250px;top:313px;width:72px;white-space:nowrap;color:#111;line-height:21px;text-align:center"><span style="font-size:13px;vertical-align:1px;-webkit-text-stroke:0.12px currentColor">凌小可</span></div>
<div style="position:absolute;left:322px;top:313px;width:72px;white-space:nowrap;color:#111;line-height:21px;text-align:center"><span style="font-size:14px;letter-spacing:0.7px">63</span></div>
<div style="position:absolute;left:394px;top:313px;width:72px;white-space:nowrap;color:#111;line-height:21px;text-align:center"><span style="font-size:14px;letter-spacing:0.7px">28</span></div>
<div style="position:absolute;left:466px;top:313px;width:72px;white-space:nowrap;color:#111;line-height:21px;text-align:center"><span style="font-size:14px;letter-spacing:0.7px">1764</span></div>
<div style="position:absolute;left:26px;top:335px;width:80px;white-space:nowrap;color:#111;line-height:21px;text-align:center"><span style="font-size:14px;letter-spacing:0.7px">2020/1/4</span></div>
<div style="position:absolute;left:106px;top:335px;width:72px;white-space:nowrap;color:#111;line-height:21px;text-align:center"><span style="font-size:13px;vertical-align:1px;-webkit-text-stroke:0.12px currentColor">武汉</span></div>
<div style="position:absolute;left:178px;top:335px;width:72px;white-space:nowrap;color:#111;line-height:21px;text-align:center"><span style="font-size:13px;vertical-align:1px;-webkit-text-stroke:0.12px currentColor">明星口罩</span></div>
<div style="position:absolute;left:250px;top:335px;width:72px;white-space:nowrap;color:#111;line-height:21px;text-align:center"><span style="font-size:13px;vertical-align:1px;-webkit-text-stroke:0.12px currentColor">王小可</span></div>
<div style="position:absolute;left:322px;top:335px;width:72px;white-space:nowrap;color:#111;line-height:21px;text-align:center"><span style="font-size:14px;letter-spacing:0.7px">25</span></div>
<div style="position:absolute;left:394px;top:335px;width:72px;white-space:nowrap;color:#111;line-height:21px;text-align:center"><span style="font-size:14px;letter-spacing:0.7px">30</span></div>
<div style="position:absolute;left:466px;top:335px;width:72px;white-space:nowrap;color:#111;line-height:21px;text-align:center"><span style="font-size:14px;letter-spacing:0.7px">750</span></div>
<div style="position:absolute;left:26px;top:357px;width:80px;white-space:nowrap;color:#111;line-height:21px;text-align:center"><span style="font-size:14px;letter-spacing:0.7px">2020/1/4</span></div>
<div style="position:absolute;left:106px;top:357px;width:72px;white-space:nowrap;color:#111;line-height:21px;text-align:center"><span style="font-size:13px;vertical-align:1px;-webkit-text-stroke:0.12px currentColor">武汉</span></div>
<div style="position:absolute;left:178px;top:357px;width:72px;white-space:nowrap;color:#111;line-height:21px;text-align:center"><span style="font-size:13px;vertical-align:1px;-webkit-text-stroke:0.12px currentColor">防雾霾口罩</span></div>
<div style="position:absolute;left:250px;top:357px;width:72px;white-space:nowrap;color:#111;line-height:21px;text-align:center"><span style="font-size:13px;vertical-align:1px;-webkit-text-stroke:0.12px currentColor">凌小可</span></div>
<div style="position:absolute;left:322px;top:357px;width:72px;white-space:nowrap;color:#111;line-height:21px;text-align:center"><span style="font-size:14px;letter-spacing:0.7px">40</span></div>
<div style="position:absolute;left:394px;top:357px;width:72px;white-space:nowrap;color:#111;line-height:21px;text-align:center"><span style="font-size:14px;letter-spacing:0.7px">28</span></div>
<div style="position:absolute;left:466px;top:357px;width:72px;white-space:nowrap;color:#111;line-height:21px;text-align:center"><span style="font-size:14px;letter-spacing:0.7px">1120</span></div>
<div style="position:absolute;left:26px;top:379px;width:80px;white-space:nowrap;color:#111;line-height:21px;text-align:center"><span style="font-size:14px;letter-spacing:0.7px">2020/1/5</span></div>
<div style="position:absolute;left:106px;top:379px;width:72px;white-space:nowrap;color:#111;line-height:21px;text-align:center"><span style="font-size:13px;vertical-align:1px;-webkit-text-stroke:0.12px currentColor">深圳</span></div>
<div style="position:absolute;left:178px;top:379px;width:72px;white-space:nowrap;color:#111;line-height:21px;text-align:center"><span style="font-size:13px;vertical-align:1px;-webkit-text-stroke:0.12px currentColor">明星口罩</span></div>
<div style="position:absolute;left:250px;top:379px;width:72px;white-space:nowrap;color:#111;line-height:21px;text-align:center"><span style="font-size:13px;vertical-align:1px;-webkit-text-stroke:0.12px currentColor">张小可</span></div>
<div style="position:absolute;left:322px;top:379px;width:72px;white-space:nowrap;color:#111;line-height:21px;text-align:center"><span style="font-size:14px;letter-spacing:0.7px">5</span></div>
<div style="position:absolute;left:394px;top:379px;width:72px;white-space:nowrap;color:#111;line-height:21px;text-align:center"><span style="font-size:14px;letter-spacing:0.7px">30</span></div>
<div style="position:absolute;left:466px;top:379px;width:72px;white-space:nowrap;color:#111;line-height:21px;text-align:center"><span style="font-size:14px;letter-spacing:0.7px">150</span></div>
<div style="position:absolute;left:26px;top:401px;width:80px;white-space:nowrap;color:#111;line-height:21px;text-align:center"><span style="font-size:14px;letter-spacing:0.7px">2020/1/5</span></div>
<div style="position:absolute;left:106px;top:401px;width:72px;white-space:nowrap;color:#111;line-height:21px;text-align:center"><span style="font-size:13px;vertical-align:1px;-webkit-text-stroke:0.12px currentColor">上海</span></div>
<div style="position:absolute;left:178px;top:401px;width:72px;white-space:nowrap;color:#111;line-height:21px;text-align:center"><span style="font-size:14px;letter-spacing:0.7px">N95</span><span style="font-size:13px;vertical-align:1px;-webkit-text-stroke:0.12px currentColor">口罩</span></div>
<div style="position:absolute;left:250px;top:401px;width:72px;white-space:nowrap;color:#111;line-height:21px;text-align:center"><span style="font-size:13px;vertical-align:1px;-webkit-text-stroke:0.12px currentColor">小可</span></div>
<div style="position:absolute;left:322px;top:401px;width:72px;white-space:nowrap;color:#111;line-height:21px;text-align:center"><span style="font-size:14px;letter-spacing:0.7px">71</span></div>
<div style="position:absolute;left:394px;top:401px;width:72px;white-space:nowrap;color:#111;line-height:21px;text-align:center"><span style="font-size:14px;letter-spacing:0.7px">25</span></div>
<div style="position:absolute;left:466px;top:401px;width:72px;white-space:nowrap;color:#111;line-height:21px;text-align:center"><span style="font-size:14px;letter-spacing:0.7px">1775</span></div>
<div style="position:absolute;left:26px;top:423px;width:80px;white-space:nowrap;color:#111;line-height:21px;text-align:center"><span style="font-size:14px;letter-spacing:0.7px">2020/1/5</span></div>
<div style="position:absolute;left:106px;top:423px;width:72px;white-space:nowrap;color:#111;line-height:21px;text-align:center"><span style="font-size:13px;vertical-align:1px;-webkit-text-stroke:0.12px currentColor">上海</span></div>
<div style="position:absolute;left:178px;top:423px;width:72px;white-space:nowrap;color:#111;line-height:21px;text-align:center"><span style="font-size:13px;vertical-align:1px;-webkit-text-stroke:0.12px currentColor">纯棉口罩</span></div>
<div style="position:absolute;left:250px;top:423px;width:72px;white-space:nowrap;color:#111;line-height:21px;text-align:center"><span style="font-size:13px;vertical-align:1px;-webkit-text-stroke:0.12px currentColor">凌小可</span></div>
<div style="position:absolute;left:322px;top:423px;width:72px;white-space:nowrap;color:#111;line-height:21px;text-align:center"><span style="font-size:14px;letter-spacing:0.7px">60</span></div>
<div style="position:absolute;left:394px;top:423px;width:72px;white-space:nowrap;color:#111;line-height:21px;text-align:center"><span style="font-size:14px;letter-spacing:0.7px">1</span></div>
<div style="position:absolute;left:466px;top:423px;width:72px;white-space:nowrap;color:#111;line-height:21px;text-align:center"><span style="font-size:14px;letter-spacing:0.7px">60</span></div>
<div style="position:absolute;left:26px;top:445px;width:80px;white-space:nowrap;color:#111;line-height:21px;text-align:center"><span style="font-size:14px;letter-spacing:0.7px">2020/1/6</span></div>
<div style="position:absolute;left:106px;top:445px;width:72px;white-space:nowrap;color:#111;line-height:21px;text-align:center"><span style="font-size:13px;vertical-align:1px;-webkit-text-stroke:0.12px currentColor">厦门</span></div>
<div style="position:absolute;left:178px;top:445px;width:72px;white-space:nowrap;color:#111;line-height:21px;text-align:center"><span style="font-size:13px;vertical-align:1px;-webkit-text-stroke:0.12px currentColor">明星口罩</span></div>
<div style="position:absolute;left:250px;top:445px;width:72px;white-space:nowrap;color:#111;line-height:21px;text-align:center"><span style="font-size:13px;vertical-align:1px;-webkit-text-stroke:0.12px currentColor">赵小可</span></div>
<div style="position:absolute;left:322px;top:445px;width:72px;white-space:nowrap;color:#111;line-height:21px;text-align:center"><span style="font-size:14px;letter-spacing:0.7px">27</span></div>
<div style="position:absolute;left:394px;top:445px;width:72px;white-space:nowrap;color:#111;line-height:21px;text-align:center"><span style="font-size:14px;letter-spacing:0.7px">30</span></div>
<div style="position:absolute;left:466px;top:445px;width:72px;white-space:nowrap;color:#111;line-height:21px;text-align:center"><span style="font-size:14px;letter-spacing:0.7px">810</span></div>
<div style="position:absolute;left:26px;top:467px;width:80px;white-space:nowrap;color:#111;line-height:21px;text-align:center"><span style="font-size:14px;letter-spacing:0.7px">2020/1/6</span></div>
<div style="position:absolute;left:106px;top:467px;width:72px;white-space:nowrap;color:#111;line-height:21px;text-align:center"><span style="font-size:13px;vertical-align:1px;-webkit-text-stroke:0.12px currentColor">武汉</span></div>
<div style="position:absolute;left:178px;top:467px;width:72px;white-space:nowrap;color:#111;line-height:21px;text-align:center"><span style="font-size:13px;vertical-align:1px;-webkit-text-stroke:0.12px currentColor">医用口罩</span></div>
<div style="position:absolute;left:250px;top:467px;width:72px;white-space:nowrap;color:#111;line-height:21px;text-align:center"><span style="font-size:13px;vertical-align:1px;-webkit-text-stroke:0.12px currentColor">小可</span></div>
<div style="position:absolute;left:322px;top:467px;width:72px;white-space:nowrap;color:#111;line-height:21px;text-align:center"><span style="font-size:14px;letter-spacing:0.7px">232</span></div>
<div style="position:absolute;left:394px;top:467px;width:72px;white-space:nowrap;color:#111;line-height:21px;text-align:center"><span style="font-size:14px;letter-spacing:0.7px">3</span></div>
<div style="position:absolute;left:466px;top:467px;width:72px;white-space:nowrap;color:#111;line-height:21px;text-align:center"><span style="font-size:14px;letter-spacing:0.7px">696</span></div>
<div style="position:absolute;left:26px;top:489px;width:80px;white-space:nowrap;color:#111;line-height:21px;text-align:center"><span style="font-size:14px;letter-spacing:0.7px">2020/1/7</span></div>
<div style="position:absolute;left:106px;top:489px;width:72px;white-space:nowrap;color:#111;line-height:21px;text-align:center"><span style="font-size:13px;vertical-align:1px;-webkit-text-stroke:0.12px currentColor">南昌</span></div>
<div style="position:absolute;left:178px;top:489px;width:72px;white-space:nowrap;color:#111;line-height:21px;text-align:center"><span style="font-size:13px;vertical-align:1px;-webkit-text-stroke:0.12px currentColor">医用口罩</span></div>
<div style="position:absolute;left:250px;top:489px;width:72px;white-space:nowrap;color:#111;line-height:21px;text-align:center"><span style="font-size:13px;vertical-align:1px;-webkit-text-stroke:0.12px currentColor">凌小可</span></div>
<div style="position:absolute;left:322px;top:489px;width:72px;white-space:nowrap;color:#111;line-height:21px;text-align:center"><span style="font-size:14px;letter-spacing:0.7px">213</span></div>
<div style="position:absolute;left:394px;top:489px;width:72px;white-space:nowrap;color:#111;line-height:21px;text-align:center"><span style="font-size:14px;letter-spacing:0.7px">3</span></div>
<div style="position:absolute;left:466px;top:489px;width:72px;white-space:nowrap;color:#111;line-height:21px;text-align:center"><span style="font-size:14px;letter-spacing:0.7px">639</span></div>
<div style="position:absolute;left:26px;top:511px;width:80px;white-space:nowrap;color:#111;line-height:21px;text-align:center"><span style="font-size:14px;letter-spacing:0.7px">2020/1/7</span></div>
<div style="position:absolute;left:106px;top:511px;width:72px;white-space:nowrap;color:#111;line-height:21px;text-align:center"><span style="font-size:13px;vertical-align:1px;-webkit-text-stroke:0.12px currentColor">上海</span></div>
<div style="position:absolute;left:178px;top:511px;width:72px;white-space:nowrap;color:#111;line-height:21px;text-align:center"><span style="font-size:13px;vertical-align:1px;-webkit-text-stroke:0.12px currentColor">纯棉口罩</span></div>
<div style="position:absolute;left:250px;top:511px;width:72px;white-space:nowrap;color:#111;line-height:21px;text-align:center"><span style="font-size:13px;vertical-align:1px;-webkit-text-stroke:0.12px currentColor">王小可</span></div>
<div style="position:absolute;left:322px;top:511px;width:72px;white-space:nowrap;color:#111;line-height:21px;text-align:center"><span style="font-size:14px;letter-spacing:0.7px">49</span></div>
<div style="position:absolute;left:394px;top:511px;width:72px;white-space:nowrap;color:#111;line-height:21px;text-align:center"><span style="font-size:14px;letter-spacing:0.7px">1</span></div>
<div style="position:absolute;left:466px;top:511px;width:72px;white-space:nowrap;color:#111;line-height:21px;text-align:center"><span style="font-size:14px;letter-spacing:0.7px">49</span></div>
<div style="position:absolute;left:26px;top:533px;width:80px;white-space:nowrap;color:#111;line-height:21px;text-align:center"><span style="font-size:14px;letter-spacing:0.7px">2020/1/8</span></div>
<div style="position:absolute;left:106px;top:533px;width:72px;white-space:nowrap;color:#111;line-height:21px;text-align:center"><span style="font-size:13px;vertical-align:1px;-webkit-text-stroke:0.12px currentColor">厦门</span></div>
<div style="position:absolute;left:178px;top:533px;width:72px;white-space:nowrap;color:#111;line-height:21px;text-align:center"><span style="font-size:13px;vertical-align:1px;-webkit-text-stroke:0.12px currentColor">明星口罩</span></div>
<div style="position:absolute;left:250px;top:533px;width:72px;white-space:nowrap;color:#111;line-height:21px;text-align:center"><span style="font-size:13px;vertical-align:1px;-webkit-text-stroke:0.12px currentColor">凌小可</span></div>
<div style="position:absolute;left:322px;top:533px;width:72px;white-space:nowrap;color:#111;line-height:21px;text-align:center"><span style="font-size:14px;letter-spacing:0.7px">6</span></div>
<div style="position:absolute;left:394px;top:533px;width:72px;white-space:nowrap;color:#111;line-height:21px;text-align:center"><span style="font-size:14px;letter-spacing:0.7px">30</span></div>
<div style="position:absolute;left:466px;top:533px;width:72px;white-space:nowrap;color:#111;line-height:21px;text-align:center"><span style="font-size:14px;letter-spacing:0.7px">180</span></div>
<div style="position:absolute;left:-1px;top:231px;white-space:nowrap;color:#333;font-size:16px;line-height:17px;text-align:center;width:25px;letter-spacing:-0.6px">1</div>
<div style="position:absolute;left:-1px;top:253px;white-space:nowrap;color:#333;font-size:16px;line-height:17px;text-align:center;width:25px;letter-spacing:-0.6px">2</div>
<div style="position:absolute;left:-1px;top:275px;white-space:nowrap;color:#333;font-size:16px;line-height:17px;text-align:center;width:25px;letter-spacing:-0.6px">3</div>
<div style="position:absolute;left:-1px;top:297px;white-space:nowrap;color:#333;font-size:16px;line-height:17px;text-align:center;width:25px;letter-spacing:-0.6px">4</div>
<div style="position:absolute;left:-1px;top:319px;white-space:nowrap;color:#333;font-size:16px;line-height:17px;text-align:center;width:25px;letter-spacing:-0.6px">5</div>
<div style="position:absolute;left:-1px;top:341px;white-space:nowrap;color:#333;font-size:16px;line-height:17px;text-align:center;width:25px;letter-spacing:-0.6px">6</div>
<div style="position:absolute;left:-1px;top:363px;white-space:nowrap;color:#333;font-size:16px;line-height:17px;text-align:center;width:25px;letter-spacing:-0.6px">7</div>
<div style="position:absolute;left:-1px;top:385px;white-space:nowrap;color:#333;font-size:16px;line-height:17px;text-align:center;width:25px;letter-spacing:-0.6px">8</div>
<div style="position:absolute;left:-1px;top:407px;white-space:nowrap;color:#333;font-size:16px;line-height:17px;text-align:center;width:25px;letter-spacing:-0.6px">9</div>
<div style="position:absolute;left:-1px;top:429px;white-space:nowrap;color:#333;font-size:16px;line-height:17px;text-align:center;width:25px;letter-spacing:-0.6px">10</div>
<div style="position:absolute;left:-1px;top:451px;white-space:nowrap;color:#333;font-size:16px;line-height:17px;text-align:center;width:25px;letter-spacing:-0.6px">11</div>
<div style="position:absolute;left:-1px;top:473px;white-space:nowrap;color:#333;font-size:16px;line-height:17px;text-align:center;width:25px;letter-spacing:-0.6px">12</div>
<div style="position:absolute;left:-1px;top:495px;white-space:nowrap;color:#333;font-size:16px;line-height:17px;text-align:center;width:25px;letter-spacing:-0.6px">13</div>
<div style="position:absolute;left:-1px;top:517px;white-space:nowrap;color:#333;font-size:16px;line-height:17px;text-align:center;width:25px;letter-spacing:-0.6px">14</div>
<div style="position:absolute;left:-1px;top:539px;white-space:nowrap;color:#333;font-size:16px;line-height:17px;text-align:center;width:25px;letter-spacing:-0.6px">15</div>
<svg style="position:absolute;left:680px;top:227px" width="3" height="322"><line x1="1.5" y1="1" x2="1.5" y2="322" stroke="#8a8a8a" stroke-width="1" stroke-dasharray="4 4"/></svg>
<div style="position:absolute;left:987px;top:208px;width:18px;height:342px;background:#e4e5e4"></div>
<div style="position:absolute;left:990px;top:226px;width:15px;height:323px;background:#d6d6d6"></div>
<div style="position:absolute;left:990px;top:210px;width:15px;height:15px;background:#fff;border:1px solid #c6c6c6;box-sizing:border-box"></div>
<div style="position:absolute;left:990px;top:226px;width:15px;height:85px;background:#fff;border:1px solid #c6c6c6;box-sizing:border-box"></div>
<div style="position:absolute;left:990px;top:535px;width:15px;height:15px;background:#fff;border:1px solid #c6c6c6;box-sizing:border-box"></div>
<div style="position:absolute;left:0px;top:550px;width:1005px;height:27px;background:#e4e5e4"></div>
<div style="position:absolute;left:97px;top:549px;width:69px;height:25px;background:#fff;border-left:1px solid #aaa;border-right:1px solid #aaa;box-sizing:border-box"></div>
<div style="position:absolute;left:98px;top:571px;width:67px;height:3px;background:#217346"></div>
<div style="position:absolute;left:110px;top:554px;white-space:nowrap;color:#217346;font-size:13.5px;line-height:16px">Sheet1</div>
<div style="position:absolute;left:620px;top:556px;width:367px;height:15px;background:#d6d6d6"></div>
<div style="position:absolute;left:620px;top:556px;width:15px;height:15px;background:#fff;border:1px solid #c6c6c6;box-sizing:border-box"></div>
<div style="position:absolute;left:635px;top:556px;width:311px;height:15px;background:#fff;border:1px solid #c6c6c6;box-sizing:border-box"></div>
<div style="position:absolute;left:972px;top:556px;width:15px;height:15px;background:#fff;border:1px solid #c6c6c6;box-sizing:border-box"></div>
<svg style="position:absolute;left:0;top:0" width="1005" height="577" viewBox="0 0 1005 577"><text x="484.5" y="163" font-family="Liberation Sans" font-weight="bold" font-size="24" fill="#cde6c6" stroke="#cde6c6" stroke-width="0.7" textLength="48" lengthAdjust="spacingAndGlyphs">秒可</text><text x="535" y="164.2" font-family="Liberation Serif" font-weight="bold" font-size="24" fill="#cde6c6" textLength="57.5" lengthAdjust="spacingAndGlyphs">Excel</text><g opacity="0.4"><text x="487.5" y="514" font-family="Liberation Sans" font-weight="bold" font-size="24" fill="#c8e6c0" stroke="#c8e6c0" stroke-width="0.7" textLength="48" lengthAdjust="spacingAndGlyphs">秒可</text><text x="538" y="515.5" font-family="Liberation Serif" font-weight="bold" font-size="24" fill="#c8e6c0" textLength="57.5" lengthAdjust="spacingAndGlyphs">Excel</text></g><defs><linearGradient id="lg" x1="0" y1="0" x2="1" y2="0"><stop offset="0" stop-color="#1f9db8"/><stop offset="0.5" stop-color="#1a94a6"/><stop offset="1" stop-color="#138270"/></linearGradient></defs><path d="M933 454Q937.5 448 942 454L967.5 493Q971.5 503.3 962 503.3L950 503.3L938 489.5L926.5 503.3L913 503.3Q903.5 503.3 907.5 493Z" fill="url(#lg)"/><path d="M938 480L950 470L968 495Q970 503 962 503.3L950 503.3L938 489.5z" fill="#117766" opacity="0.85"/><path d="M926 503.3L935 478L938 489.5z" fill="#16806e" opacity="0.7"/><path d="M922 466L927 459L926 474z" fill="#b9dfe6" opacity="0.8"/><path d="M935 468L941 466L939 478z" fill="#8fc8e0" opacity="0.9"/><path d="M945 470L948 473L951 487L948 485z" fill="#cfe9ee" opacity="0.8"/><path d="M927 476L931 486L928 483z" fill="#d6eef2" opacity="0.8"/><path d="M912 487L916 480L915 491z" fill="#5aa8d8" opacity="0.6"/><rect x="940" y="497" width="3.6" height="3.6" fill="#137a68"/><text x="896.5" y="527" font-family="Liberation Sans" font-size="20.5" fill="#177567" stroke="#177567" stroke-width="0.5" letter-spacing="0.5">秒可职场</text><text x="897" y="537.5" font-family="Liberation Sans" font-size="6" fill="#2b7a70" textLength="82" lengthAdjust="spacingAndGlyphs">Miao Vocational Education</text></svg>
<svg style="position:absolute;left:0;top:0" width="1005" height="577" viewBox="0 0 1005 577"><path d="M6 136h11.5l2.5 2.5v11.2h-14z" fill="#7d6b98"/><rect x="8.3" y="137.3" width="9.3" height="5.8" fill="#fff"/><rect x="9.8" y="145" width="6.5" height="4.7" fill="#fff"/><rect x="11.8" y="146.5" width="2.5" height="3.2" fill="#7d6b98"/><path d="M37 140h7a4.1 4.1 0 0 1 0 8.2h-1.5" fill="none" stroke="#3c7fc4" stroke-width="2"/><path d="M35 140l5.7-4.3v8.6z" fill="#3c7fc4"/><path d="M40.7 137.5l-3.2 2.5 3.2 2.5" fill="none" stroke="#3c7fc4" stroke-width="1.5"/><path d="M54 141.2h5l-2.5 2.6z" fill="#666"/><path d="M69 136h15.3l-5.6 6.2v7.5h-4.1v-7.5z" fill="#666"/><path d="M111 140h-7a4.1 4.1 0 0 0 0 8.2h1.5" fill="none" stroke="#3c7fc4" stroke-width="2"/><path d="M113 140l-5.7-4.3v8.6z" fill="#3c7fc4"/><path d="M118.2 141.2h5l-2.5 2.6z" fill="#666"/><path d="M133 138.5a1 1 0 0 1 1-1h4l1.5 1.5h7.5v3h-14z" fill="#e8b872"/><path d="M133 149l2.5-7.5h14l-2.5 7.5z" fill="#efc585"/><path d="M133 140v9" stroke="#e8b872" stroke-width="1"/><text x="164" y="149.3" font-family="Liberation Sans" font-size="15" fill="#555" stroke="#555" stroke-width="0.4">%</text><path d="M190.5 138.2v-2h5.5v2" fill="none" stroke="#666" stroke-width="1.3"/><rect x="187" y="138.5" width="13" height="10.4" rx="1" fill="#6a6a6a"/><path d="M187 143.2h13" stroke="#e6e6e6" stroke-width="0.8"/><rect x="192" y="142" width="3" height="2.5" fill="#fff"/><path d="M201.5 140v4" stroke="#3c7fc4" stroke-width="1"/><rect x="200" y="143.5" width="3" height="5.5" rx="1" fill="#3c7fc4"/><path d="M209 141.2h5l-2.5 2.6z" fill="#666"/><path d="M229 139h7.7M229.5 141.5l3.5 3.8 3.5-3.8" fill="none" stroke="#555" stroke-width="1"/><path d="M90.5 181h7.5l-3.75 4z" fill="#666"/><g fill="#999"><rect x="118" y="179" width="2" height="2"/><rect x="118" y="183" width="2" height="2"/><rect x="118" y="187" width="2" height="2"/></g><path d="M148.5 179.5l9.5 9.5M158 179.5l-9.5 9.5" stroke="#b8b8b8" stroke-width="1.3"/><path d="M183 184.5l4 4 8.5-9" fill="none" stroke="#b8b8b8" stroke-width="1.8"/><text x="219.5" y="189" font-family="Liberation Serif" font-style="italic" font-weight="bold" font-size="13" fill="#555">f</text><text x="225" y="189" font-family="Liberation Serif" font-style="italic" font-weight="bold" font-size="10" fill="#555">x</text><path d="M22 212v11h-11z" fill="#b9b9b9"/><path d="M994 219h7l-3.5-4z" fill="#666"/><path d="M994 541h7l-3.5 4z" fill="#666"/><path d="M629.5 559.5v8l-4.5-4z" fill="#666"/><path d="M977.5 559.5v8l4.5-4z" fill="#666"/><path d="M28 558.5v8l-4-4z" fill="#bcbcbc"/><path d="M53.5 558.5v8l4-4z" fill="#bcbcbc"/><g fill="#999"><rect x="603" y="557.5" width="2" height="2"/><rect x="603" y="561.5" width="2" height="2"/><rect x="603" y="565.5" width="2" height="2"/></g><circle cx="207" cy="563" r="7.3" fill="none" stroke="#777" stroke-width="1.2"/><path d="M207 558.5v9M202.5 563h9" stroke="#777" stroke-width="1.8"/></svg>
</body></html>
